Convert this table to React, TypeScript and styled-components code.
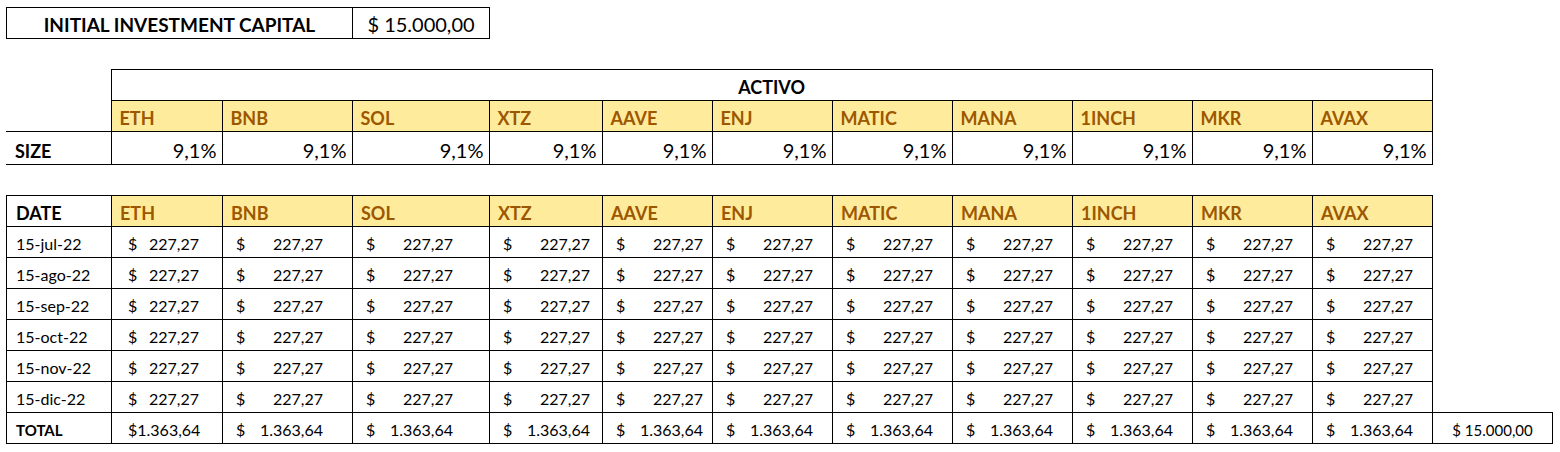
import React from "react";
import styled, { createGlobalStyle, css } from "styled-components";

const GlobalStyle = createGlobalStyle`
  html, body { margin: 0; padding: 0; background: #ffffff; }
  body { font-family: Lato, "Open Sans", "Liberation Sans", sans-serif; color: #000; }
`;

const ASSETS = ["ETH", "BNB", "SOL", "XTZ", "AAVE", "ENJ", "MATIC", "MANA", "1INCH", "MKR", "AVAX"];
const LABEL_W = 105;
const ASSET_W = [111, 130, 137, 113, 110, 120, 120, 120, 120, 120, 120];
const EXTRA_W = 120;
const MONEY_PAD = [16, 13, 13, 13, 13, 13, 13, 13, 13, 13, 13];
const MONEY_W = [71, 87, 87, 87, 87, 87, 87, 87, 87, 87, 87];
const DATES = ["15-jul-22", "15-ago-22", "15-sep-22", "15-oct-22", "15-nov-22", "15-dic-22"];

const sum = (a: number[]) => a.reduce((s, v) => s + v, 0);

const Sheet = styled.main`
  display: flex;
  flex-direction: column;
  align-items: flex-start;
  gap: 30px;
  padding: 7px 0 0 6px;
`;

const Grid = styled.table<{ $width: number }>`
  border-collapse: collapse;
  table-layout: fixed;
  width: ${(p) => p.$width}px;
`;

const Col = styled.col<{ $w: number }>`
  width: ${(p) => p.$w}px;
`;

const Row = styled.tr<{ $h?: number }>`
  height: ${(p) => p.$h ?? 31}px;
`;

const base = css`
  box-sizing: border-box;
  padding: 0 0 5px 0;
  vertical-align: bottom;
  line-height: 1;
  white-space: nowrap;
  overflow: hidden;
`;

const boxed = css`
  border: 1px solid #000;
`;

const TitleCell = styled.td`
  ${base};
  ${boxed};
  text-align: center;
  font-weight: 700;
  font-size: 19px;
  padding-bottom: 4px;
`;

const AmountCell = styled.td<{ $size: number }>`
  ${base};
  ${boxed};
  text-align: center;
  font-size: ${(p) => p.$size}px;
  padding-bottom: ${(p) => (p.$size > 16 ? 4 : 5)}px;
`;

const BlankCell = styled.td`
  ${base};
  border: none;
`;

const GroupCell = styled.td`
  ${base};
  ${boxed};
  text-align: center;
  font-weight: 700;
  font-size: 18px;
  padding-bottom: 4px;
`;

const AssetHead = styled.td`
  ${base};
  ${boxed};
  background: #ffeb9c;
  color: #9c5700;
  font-weight: 700;
  font-size: 18px;
  padding: 0 0 4px 8px;
`;

const RowLabel = styled.td<{ $size: number; $open?: boolean }>`
  ${base};
  ${boxed};
  ${(p) => p.$open && "border-left: none;"}
  font-weight: 700;
  font-size: ${(p) => p.$size}px;
  padding: 0 0 ${(p) => (p.$size > 16 ? 4 : 5)}px 9px;
`;

const PctCell = styled.td`
  ${base};
  ${boxed};
  text-align: right;
  font-size: 20px;
  padding: 0 5px 4px 0;
`;

const DateCell = styled.td`
  ${base};
  ${boxed};
  font-size: 16px;
  padding-left: 9px;
`;

const MoneyCell = styled.td<{ $pad: number }>`
  ${base};
  ${boxed};
  font-size: 16px;
  padding-left: ${(p) => p.$pad}px;
`;

const Money = styled.span<{ $w: number }>`
  display: flex;
  justify-content: space-between;
  width: ${(p) => p.$w}px;
`;

const Amount: React.FC<{ i: number; value: string }> = ({ i, value }) => (
  <MoneyCell $pad={MONEY_PAD[i]}>
    <Money $w={MONEY_W[i]}>
      <span>$</span>
      <span>{value}</span>
    </Money>
  </MoneyCell>
);

export default function App() {
  return (
    <>
      <GlobalStyle />
      <Sheet>
        <Grid $width={346 + 137}>
          <colgroup>
            <Col $w={346} />
            <Col $w={137} />
          </colgroup>
          <tbody>
            <Row>
              <TitleCell>INITIAL INVESTMENT CAPITAL</TitleCell>
              <AmountCell $size={20}>$ 15.000,00</AmountCell>
            </Row>
          </tbody>
        </Grid>

        <Grid $width={LABEL_W + sum(ASSET_W)}>
          <colgroup>
            <Col $w={LABEL_W} />
            {ASSET_W.map((w, i) => (
              <Col key={i} $w={w} />
            ))}
          </colgroup>
          <tbody>
            <Row>
              <BlankCell />
              <GroupCell colSpan={ASSETS.length}>ACTIVO</GroupCell>
            </Row>
            <Row>
              <BlankCell />
              {ASSETS.map((a) => (
                <AssetHead key={a}>{a}</AssetHead>
              ))}
            </Row>
            <Row $h={33}>
              <RowLabel $size={18} $open>
                SIZE
              </RowLabel>
              {ASSETS.map((a) => (
                <PctCell key={a}>9,1%</PctCell>
              ))}
            </Row>
          </tbody>
        </Grid>

        <Grid $width={LABEL_W + sum(ASSET_W) + EXTRA_W}>
          <colgroup>
            <Col $w={LABEL_W} />
            {ASSET_W.map((w, i) => (
              <Col key={i} $w={w} />
            ))}
            <Col $w={EXTRA_W} />
          </colgroup>
          <tbody>
            <Row>
              <RowLabel $size={18}>DATE</RowLabel>
              {ASSETS.map((a) => (
                <AssetHead key={a}>{a}</AssetHead>
              ))}
              <BlankCell />
            </Row>
            {DATES.map((d) => (
              <Row key={d}>
                <DateCell>{d}</DateCell>
                {ASSETS.map((a, i) => (
                  <Amount key={a} i={i} value="227,27" />
                ))}
                <BlankCell />
              </Row>
            ))}
            <Row>
              <RowLabel $size={15}>TOTAL</RowLabel>
              {ASSETS.map((a, i) => (
                <Amount key={a} i={i} value="1.363,64" />
              ))}
              <AmountCell $size={15}>$ 15.000,00</AmountCell>
            </Row>
          </tbody>
        </Grid>
      </Sheet>
    </>
  );
}
